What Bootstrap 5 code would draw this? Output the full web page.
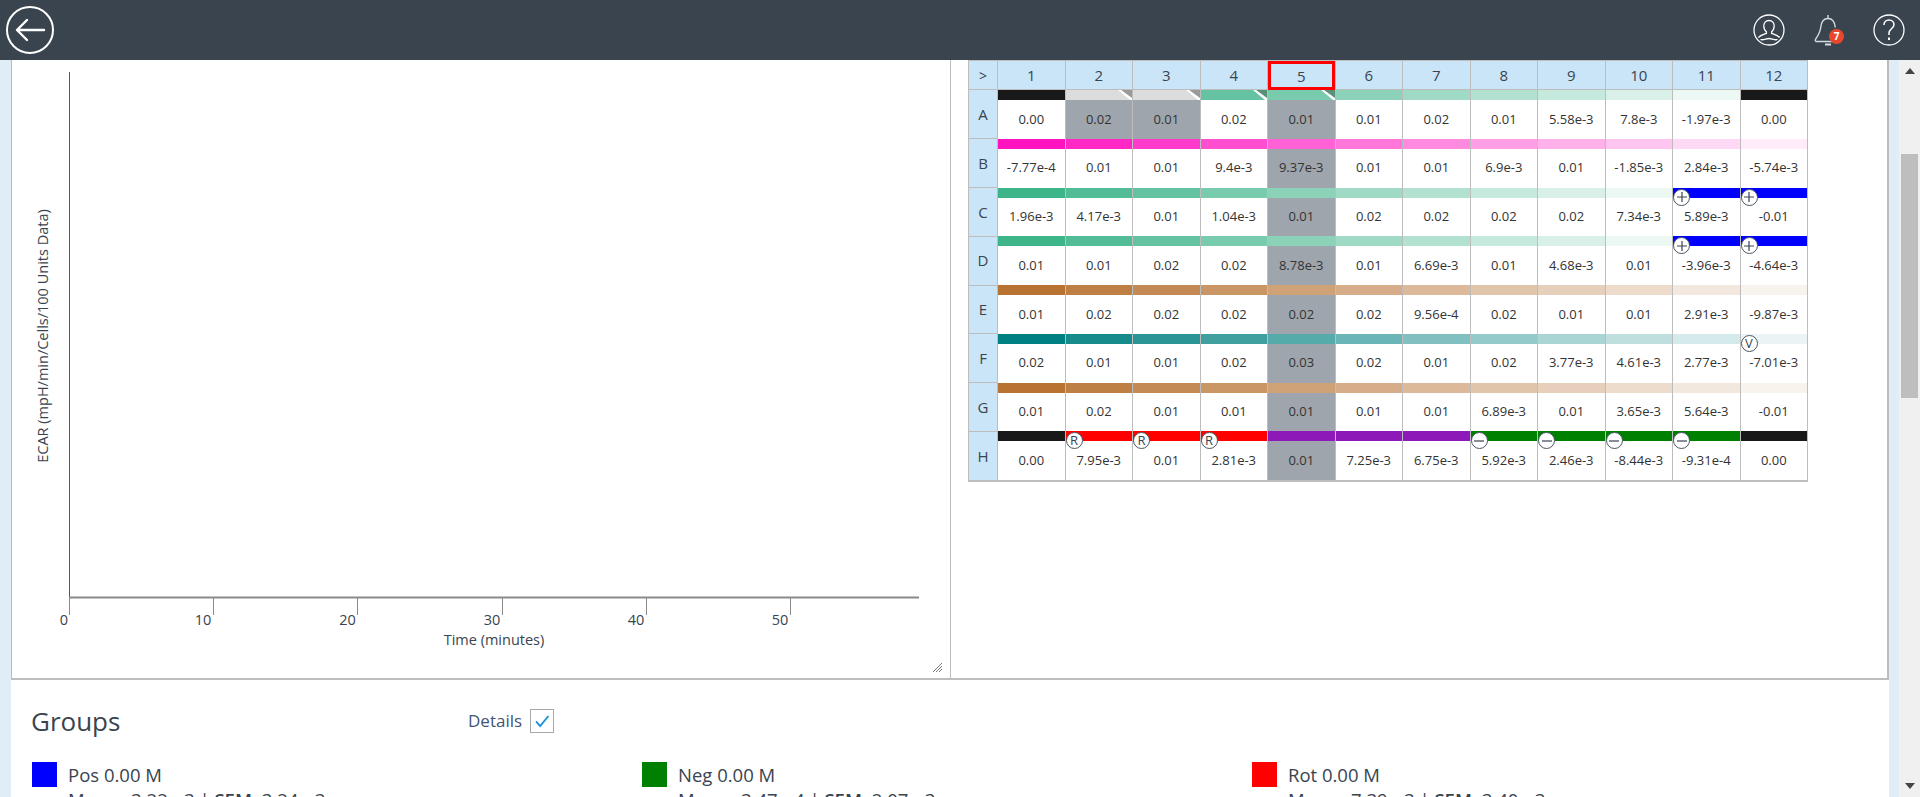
<!DOCTYPE html>
<html lang="en">
<head>
  <meta charset="UTF-8">
  <meta name="viewport" content="width=device-width, initial-scale=1">
  <title>Plate overview</title>
  <link href="https://cdn.jsdelivr.net/npm/bootstrap@5.3.0/dist/css/bootstrap.min.css" rel="stylesheet">
  <style>
    html, body { height: 100%; overflow: hidden; }
    body {
      background-color: #e0edf6;
      font-family: "Open Sans", "Noto Sans", sans-serif;
      color: #39444f;
    }
    .top-bar { height: 60px; background-color: #39444f; padding: 0 13px 0 6px; }
    .top-icon { display: block; width: 36px; height: 36px; }
    .icon-gap { gap: 24px; }
    .bell-wrap { position: relative; width: 36px; height: 36px; }
    .bell-count {
      position: absolute; left: 18px; top: 17px;
      width: 15px; height: 15px; border-radius: 50%;
      background-color: #e8472d; color: #fff;
      font-size: 10px; font-weight: 700; line-height: 15px; text-align: center;
    }
    .page-body { height: 737px; }
    .page-strip { width: 11px; }
    .page-main { width: 1878px; background-color: #fff; }
    .plots-panel {
      height: 620px;
      border-left: 1px solid #bdbdbd;
      border-right: 2px solid #bdbdbd;
      border-bottom: 2px solid #bdbdbd;
    }
    .chart-pane { width: 939px; border-right: 1px solid #bdbdbd; position: relative; }
    .chart-svg { display: block; width: 938px; height: 618px; }
    .chart-svg text { font-family: "Open Sans", sans-serif; font-size: 14.5px; fill: #39444f; }
    .grip { position: absolute; right: 8px; bottom: 6px; width: 9px; height: 9px; }
    .plate-pane { padding-left: 17px; }
    .plate-table {
      --bs-table-border-color: #bdbdbd;
      width: 840px; margin: 0;
      table-layout: fixed;
      font-size: 13px; color: #333;
    }
    .plate-table tbody tr { border-width: 0; }
    .plate-table tbody tr:last-child { border-bottom: 2px solid #bdbdbd; }
    .plate-table tbody th { border-top: 1px solid #bdbdbd; }
    .plate-table .axis-cell {
      background-color: #cbe5f8; color: #39444f;
      font-size: 15px; text-align: center; vertical-align: middle;
    }
    .plate-table .corner-cell { width: 29px; font-size: 14px; }
    .plate-table .column-cell { height: 29px; }
    .plate-table .picked-cell { outline: 3px solid #f00; outline-offset: -3px; padding-top: 3px !important; }
    .plate-table .well-cell { height: 48.75px; position: relative; }
    .well-bar { height: 10px; position: relative; }
    .well-num { height: 38.75px; display: flex; align-items: center; justify-content: center; }
    .well-off .well-num { background-color: #9fa5ac; }
    .well-flag { position: absolute; right: 0; top: 0; width: 14px; height: 10px; display: block; }
    .well-tag {
      position: absolute; left: 0; top: 1px;
      width: 17px; height: 17px;
      border: 1.5px solid #4a5562; border-radius: 50%;
      background-color: #fff; color: #39444f;
      display: flex; align-items: center; justify-content: center;
      font-size: 13px; line-height: 1;
    }
    .well-tag svg { width: 12px; height: 12px; display: block; }
    .groups-title { font-size: 26px; font-weight: 400; margin: 0; width: 437px; line-height: 32px; }
    .groups-head { padding: 25px 0 0 20px; }
    .details-label { font-size: 17px; line-height: 24px; color: #41557a; }
    .check-box { width: 24px; height: 24px; border: 1px solid #a5a9ad; margin-left: 8px; display: block; }
    .group-list { margin: 0; padding: 25px 27px 0 21px; }
    .group-swatch { width: 25px; height: 25px; flex: none; margin-right: 11px; }
    .group-name { font-size: 18.5px; line-height: 25px; }
    .group-stats { font-size: 18.5px; padding-left: 36px; line-height: 22px; margin-top: 2px; }
    .group-stats b { font-weight: 600; }
    .bg-pos { background-color: #00f; }
    .bg-neg { background-color: #008000; }
    .bg-rot { background-color: #f00; }
    .scroll-lane { width: 10px; }
    .scroll-track { width: 21px; background-color: #f0f0f0; padding-top: 8px; }
    .scroll-up { width: 0; height: 0; border: 5px solid transparent; border-top: 0; border-bottom: 6px solid #444; margin: 0 auto; }
    .scroll-thumb { width: 17px; height: 244px; background-color: #bebebe; margin: 80px auto 0; }
    .scroll-down { width: 0; height: 0; border: 5px solid transparent; border-bottom: 0; border-top: 6px solid #444; margin: 385px auto 0; }
  </style>
</head>
<body>

<!-- Top bar -->
<nav class="top-bar d-flex align-items-center justify-content-between">
  <svg width="48" height="48" viewBox="0 0 48 48" fill="none" stroke="#fff" aria-label="Back">
    <circle cx="24" cy="24" r="23" stroke-width="2"/>
    <path d="M38 24H11M21 14L11 24l10 10" stroke-width="2.4" stroke-linecap="round" stroke-linejoin="round"/>
  </svg>
  <div class="d-flex align-items-center icon-gap">
    <svg class="top-icon" viewBox="0 0 36 36" fill="none" stroke="#fff" stroke-width="1.3" aria-label="Account">
      <circle cx="18" cy="18" r="15"/>
      <path d="M18 8.500c-3.400 0-5.200 2.600-5.200 5.600 0 2.400 1 4.400 2.600 5.600v1.600c-2.600 1-6 1.800-8 4.200M18 8.500c3.400 0 5.200 2.600 5.200 5.600 0 2.400-1 4.400-2.600 5.600v1.600c2.600 1 6 1.800 8 4.200M9.500 27.500c3 1 5.500-1 8.500-1s5.500 2 8.500 1"/>
    </svg>
    <div class="bell-wrap">
      <svg class="top-icon" viewBox="0 0 36 36" fill="none" stroke="#d8dbde" stroke-width="1.4" aria-label="Notifications">
        <path d="M17 3v3.500M17 6.500c-5 0-6.800 4-7.300 9-.4 4-2.200 7.500-5 11.500-.7 1.200-.5 2.500 1 2.500h24M17 6.500c5 0 6.800 4 7.300 9"/>
        <path d="M14 32.500h6" stroke-width="2"/>
      </svg>
      <span class="bell-count">7</span>
    </div>
    <svg class="top-icon" viewBox="0 0 36 36" fill="none" stroke="#fff" stroke-width="1.3" aria-label="Help">
      <circle cx="18" cy="18" r="15"/>
      <path d="M13 13c0-3 2.200-5 5-5s5 2 5 4.600c0 4-5 4.400-5 8.400v2" stroke-width="1.500"/>
      <path d="M18 25.500v2.500" stroke-width="2"/>
    </svg>
  </div>
</nav>

<div class="page-body d-flex">
  <div class="page-strip"></div>

  <main class="page-main overflow-hidden">
    <div class="plots-panel d-flex">
      <!-- Kinetic plot -->
      <div class="chart-pane">
        <svg class="chart-svg" viewBox="12 60 938 618">
          <line x1="69.500" y1="72" x2="69.500" y2="597" stroke="#555" stroke-width="1"/>
          <line x1="69" y1="597.500" x2="919" y2="597.500" stroke="#8a8a8a" stroke-width="2"/>
          <g stroke="#8a8a8a">
            <line x1="69.500" y1="597" x2="69.500" y2="615"/>
            <line x1="213.500" y1="597" x2="213.500" y2="615"/>
            <line x1="357.500" y1="597" x2="357.500" y2="615"/>
            <line x1="502.500" y1="597" x2="502.500" y2="615"/>
            <line x1="646.500" y1="597" x2="646.500" y2="615"/>
            <line x1="790.500" y1="597" x2="790.500" y2="615"/>
          </g>
          <g text-anchor="middle">
            <text x="64" y="625">0</text>
            <text x="203" y="625">10</text>
            <text x="347.500" y="625">20</text>
            <text x="492" y="625">30</text>
            <text x="636" y="625">40</text>
            <text x="780" y="625">50</text>
            <text x="494" y="645">Time (minutes)</text>
            <text transform="translate(48 336) rotate(-90)">ECAR (mpH/min/Cells/100 Units Data)</text>
          </g>
        </svg>
        <svg class="grip" viewBox="0 0 9 9" stroke="#777"><path d="M0 9L9 0M3 9l6-6M6 9l3-3"/></svg>
      </div>

      <!-- Plate map -->
      <div class="plate-pane">
        <table class="table table-bordered plate-table">
          <thead><tr id="plateHead"></tr></thead>
          <tbody id="plateRows"></tbody>
        </table>
      </div>
    </div>

    <!-- Groups -->
    <div class="groups-head d-flex align-items-center">
      <h2 class="groups-title">Groups</h2>
      <span class="details-label">Details</span>
      <svg class="check-box" viewBox="0 0 24 24" fill="none" stroke="#1a90d9" stroke-width="2"><path d="M5.500 12.500l4.500 5L19 6.500"/></svg>
    </div>
    <div class="row g-0 group-list">
      <div class="col-4">
        <div class="d-flex"><span class="group-swatch bg-pos"></span><span class="group-name">Pos 0.00 M</span></div>
        <div class="group-stats">Mean:&nbsp; 3.22e-3 | <b>SEM:</b> 3.24e-3</div>
      </div>
      <div class="col-4">
        <div class="d-flex"><span class="group-swatch bg-neg"></span><span class="group-name">Neg 0.00 M</span></div>
        <div class="group-stats">Mean:&nbsp; 3.47e-4 | <b>SEM:</b> 2.07e-3</div>
      </div>
      <div class="col-4">
        <div class="d-flex"><span class="group-swatch bg-rot"></span><span class="group-name">Rot 0.00 M</span></div>
        <div class="group-stats">Mean:&nbsp; 7.39e-3 | <b>SEM:</b> 3.40e-3</div>
      </div>
    </div>
  </main>

  <div class="scroll-lane"></div>
  <div class="scroll-track">
    <div class="scroll-up"></div>
    <div class="scroll-thumb"></div>
    <div class="scroll-down"></div>
  </div>
</div>

<script>
  const BLACK = '#191919', BLUE = '#0000ff', RED = '#ff0000', GREEN = '#008000', PURPLE = '#8d1ab8';
  const OFF = '#dcdcdc';

  // each row: base colour, the column where the fade starts, how many steps it has, overrides
  const rows = [
    {id: 'A', base: '#3eb489', from: 2, steps: 10, vals: ['0.00','0.02','0.01','0.02','0.01','0.01','0.02','0.01','5.58e-3','7.8e-3','-1.97e-3','0.00'],
      solid: {1: BLACK, 2: OFF, 3: OFF, 12: BLACK}, off: [2, 3], flag: [2, 3, 4, 5]},
    {id: 'B', base: '#ff14c0', from: 1, steps: 12, vals: ['-7.77e-4','0.01','0.01','9.4e-3','9.37e-3','0.01','0.01','6.9e-3','0.01','-1.85e-3','2.84e-3','-5.74e-3']},
    {id: 'C', base: '#3eb489', from: 1, steps: 10, vals: ['1.96e-3','4.17e-3','0.01','1.04e-3','0.01','0.02','0.02','0.02','0.02','7.34e-3','5.89e-3','-0.01'],
      solid: {11: BLUE, 12: BLUE}, tag: {11: '+', 12: '+'}},
    {id: 'D', base: '#3eb489', from: 1, steps: 10, vals: ['0.01','0.01','0.02','0.02','8.78e-3','0.01','6.69e-3','0.01','4.68e-3','0.01','-3.96e-3','-4.64e-3'],
      solid: {11: BLUE, 12: BLUE}, tag: {11: '+', 12: '+'}},
    {id: 'E', base: '#b87333', from: 1, steps: 12, vals: ['0.01','0.02','0.02','0.02','0.02','0.02','9.56e-4','0.02','0.01','0.01','2.91e-3','-9.87e-3']},
    {id: 'F', base: '#008080', from: 1, steps: 12, vals: ['0.02','0.01','0.01','0.02','0.03','0.02','0.01','0.02','3.77e-3','4.61e-3','2.77e-3','-7.01e-3'], tag: {12: 'V'}},
    {id: 'G', base: '#b87333', from: 1, steps: 12, vals: ['0.01','0.02','0.01','0.01','0.01','0.01','0.01','6.89e-3','0.01','3.65e-3','5.64e-3','-0.01']},
    {id: 'H', base: BLACK, from: 1, steps: 1, vals: ['0.00','7.95e-3','0.01','2.81e-3','0.01','7.25e-3','6.75e-3','5.92e-3','2.46e-3','-8.44e-3','-9.31e-4','0.00'],
      solid: {1: BLACK, 2: RED, 3: RED, 4: RED, 5: PURPLE, 6: PURPLE, 7: PURPLE, 8: GREEN, 9: GREEN, 10: GREEN, 11: GREEN, 12: BLACK},
      tag: {2: 'R', 3: 'R', 4: 'R', 8: '-', 9: '-', 10: '-', 11: '-'}}
  ];

  // mix a hex colour with white
  function fade(hex, amount) {
    const parts = [1, 3, 5].map(i => parseInt(hex.slice(i, i + 2), 16));
    return 'rgb(' + parts.map(p => Math.round(255 - (255 - p) * amount)).join(',') + ')';
  }

  function tagHtml(kind) {
    if (kind === '+') return '<span class="well-tag"><svg viewBox="0 0 12 12" stroke="#39444f" stroke-width="1.2"><path d="M1 6h10M6 1v10"/></svg></span>';
    if (kind === '-') return '<span class="well-tag"><svg viewBox="0 0 12 12" stroke="#39444f" stroke-width="1.2"><path d="M1 6h10"/></svg></span>';
    return '<span class="well-tag">' + kind + '</span>';
  }

  function flagHtml(dark) {
    return '<svg class="well-flag" viewBox="0 0 14 10"><polygon points="3,0 14,0 14,10" fill="' + dark + '"/><polygon points="0,0 3,0 14,8 14,10 12,10" fill="#fff"/></svg>';
  }

  let head = '<th class="axis-cell corner-cell p-0 fw-normal">&gt;</th>';
  for (let c = 1; c <= 12; c++) {
    head += '<th class="axis-cell column-cell p-0 fw-normal' + (c === 5 ? ' picked-cell' : '') + '">' + c + '</th>';
  }
  document.getElementById('plateHead').innerHTML = head;

  document.getElementById('plateRows').innerHTML = rows.map(row => {
    let html = '<tr><th class="axis-cell p-0 fw-normal">' + row.id + '</th>';
    row.vals.forEach((val, i) => {
      const c = i + 1;
      const solid = row.solid && row.solid[c];
      const color = solid || fade(row.base, (row.steps + row.from - c) / row.steps);
      const isOff = c === 5 || (row.off && row.off.includes(c));
      const flag = row.flag && row.flag.includes(c) ? flagHtml(c < 4 ? '#999' : '#5a8f78') : '';
      const tag = row.tag && row.tag[c] ? tagHtml(row.tag[c]) : '';
      html += '<td class="well-cell p-0' + (isOff ? ' well-off' : '') + '">' +
        '<div class="well-bar" style="background-color:' + color + '">' + flag + '</div>' +
        tag + '<div class="well-num">' + val + '</div></td>';
    });
    return html + '</tr>';
  }).join('');
</script>

<script src="https://cdn.jsdelivr.net/npm/bootstrap@5.3.0/dist/js/bootstrap.bundle.min.js"></script>
</body>
</html>
